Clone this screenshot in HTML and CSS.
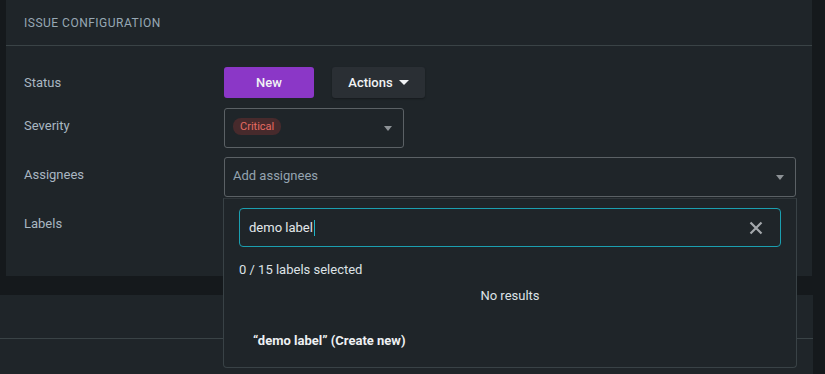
FILE: index.html
```html
<!DOCTYPE html>
<html lang="en">
  <head>
    <meta charset="UTF-8" />
    <meta name="viewport" content="width=device-width, initial-scale=1.0" />
    <title>Issue configuration</title>
    <link rel="stylesheet" href="styles.css">
  </head>
  <body>
    <div class="page">
      <div class="panel config">
        <div class="panel-head">Issue configuration</div>
        <div class="form">
          <div class="row">
            <span class="label label-status">Status</span>
            <div class="field buttons">
              <button class="btn btn-status">New</button>
              <button class="btn btn-actions">Actions <span class="caret"></span></button>
            </div>
          </div>
          <div class="row">
            <span class="label">Severity</span>
            <div class="field">
              <div class="select select-severity">
                <span class="pill">Critical</span>
                <span class="caret caret-grey"></span>
              </div>
            </div>
          </div>
          <div class="row">
            <span class="label">Assignees</span>
            <div class="field">
              <div class="select select-wide">
                <span class="placeholder">Add assignees</span>
                <span class="caret caret-grey"></span>
              </div>
            </div>
          </div>
          <div class="row row-labels">
            <span class="label">Labels</span>
          </div>
        </div>
      </div>
      <div class="panel second">
        <div class="panel-head empty"></div>
      </div>

      <div class="dropdown">
        <div class="search">
          <span class="search-text">demo label</span><span class="cursor"></span>
          <svg class="clear" width="14" height="14" viewBox="0 0 14 14">
            <path d="M1.5 1.5 L12.5 12.5 M12.5 1.5 L1.5 12.5" stroke="#a4a8ac" stroke-width="2.2" fill="none"/>
          </svg>
        </div>
        <div class="count">0 / 15 labels selected</div>
        <div class="no-results">No results</div>
        <div class="create">&ldquo;demo label&rdquo; (Create new)</div>
      </div>
    </div>
  </body>
</html>
```

FILE: styles.css
```css
* {
  margin: 0;
  padding: 0;
  box-sizing: border-box;
}
body {
  background-color: #15191c;
  font-family: Roboto, "Noto Sans", sans-serif;
  font-size: 13px;
  color: #a9b7c2;
}
.page {
  position: relative;
  width: 825px;
  height: 374px;
  overflow: hidden;
}
.panel {
  background-color: #1f2529;
}
.config {
  margin-left: 6px;
  width: 806px;
  height: 276px;
}
.panel-head {
  height: 46px;
  border-bottom: 1px solid #3a4346;
  padding-left: 18px;
  line-height: 46px;
  font-size: 12px;
  text-transform: uppercase;
  letter-spacing: 0.5px;
  color: #97a8b4;
}
.second {
  margin-top: 19px;
  width: 813px;
  height: 100px;
}
.panel-head.empty {
  height: 44px;
}
.form {
  padding: 21px 0 0 18px;
  display: flex;
  flex-direction: column;
  gap: 9px;
}
.row {
  display: flex;
  align-items: center;
}
.label {
  width: 200px;
  font-size: 13px;
  color: #a9b7c2;
  margin-bottom: 5px;
}
.label-status {
  margin-bottom: 1px;
}
.row-labels {
  height: 38px;
  margin-top: 1px;
}
.buttons {
  display: flex;
  gap: 18px;
  margin-bottom: 1px;
}
.btn {
  border: none;
  height: 31px;
  border-radius: 3px;
  font-family: Roboto, "Noto Sans", sans-serif;
  font-size: 13px;
  font-weight: 500;
  color: #f1f3f5;
}
.btn-status {
  width: 90px;
  background-color: #8b37c7;
}
.btn-actions {
  width: 93px;
  background-color: #2a2f34;
  display: flex;
  align-items: center;
  justify-content: center;
  gap: 6px;
  box-shadow: 0 1px 2px rgba(0, 0, 0, 0.3);
}
.caret {
  width: 0;
  height: 0;
  border-left: 5px solid transparent;
  border-right: 5px solid transparent;
  border-top: 5px solid #f1f3f5;
}
.caret-grey {
  border-left-width: 4px;
  border-right-width: 4px;
  border-top: 5px solid #8d9296;
}
.select {
  display: flex;
  align-items: center;
  justify-content: space-between;
  border: 1px solid #5b6165;
  border-radius: 3px;
  padding: 0 11px 0 8px;
}
.select-severity {
  width: 180px;
  height: 40px;
}
.select-wide {
  width: 572px;
  height: 40px;
}
.pill {
  background-color: #472a2c;
  color: #e66a62;
  font-size: 11px;
  padding: 2px 7px;
  border-radius: 8px;
  line-height: 13px;
  margin-bottom: 3px;
}
.placeholder {
  color: #94a4b0;
  margin-bottom: 4px;
}
.dropdown {
  position: absolute;
  left: 223px;
  top: 198px;
  width: 574px;
  height: 170px;
  background-color: #1f2529;
  border: 1px solid #394246;
  border-top-color: #2f363a;
  border-radius: 0 0 4px 4px;
  padding: 9px 15px 0 15px;
}
.search {
  display: flex;
  align-items: center;
  height: 39px;
  border: 1px solid #1b9fb0;
  border-radius: 4px;
  padding: 0 17px 0 9px;
  font-size: 13px;
  color: #e3e8eb;
}
.cursor {
  width: 1px;
  height: 16px;
  background-color: #1fb5c8;
  margin-left: 1px;
}
.clear {
  margin-left: auto;
}
.count {
  margin-top: 15px;
  font-size: 13px;
  color: #dde2e6;
}
.no-results {
  margin-top: 11px;
  text-align: center;
  font-size: 13px;
  color: #dde2e6;
}
.create {
  margin-top: 30px;
  padding-left: 14px;
  font-size: 13px;
  font-weight: bold;
  color: #eef1f3;
}
```
